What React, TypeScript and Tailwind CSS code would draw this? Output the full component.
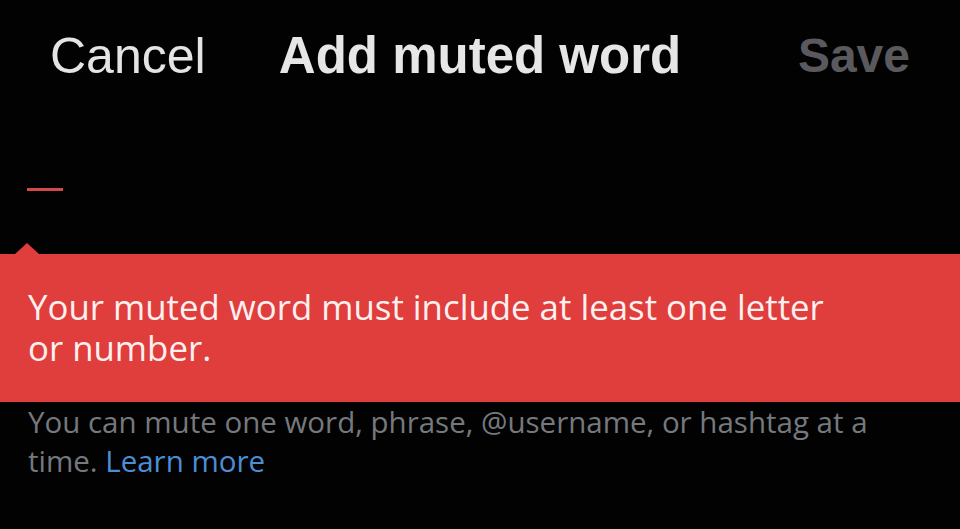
export default function App() {
  return (
    <div
      className="w-[960px] h-[529px] bg-[#020202] overflow-hidden"
      style={{ fontFamily: '"Liberation Sans", Arial, sans-serif' }}
    >
      <div className="grid grid-cols-[1fr_auto_1fr] items-center h-[110px] px-[50px] pt-[2px]">
        <div className="text-[50px] text-[#e4e4e4] justify-self-start">Cancel</div>
        <div className="text-[51px] font-bold text-[#e6e6e6]">Add muted word</div>
        <div className="text-[48px] font-bold text-[#5a5a5e] justify-self-end">Save</div>
      </div>

      <div className="pt-[78px] pl-[27px]">
        <div className="w-[36px] h-[3px] bg-[#d24a4a]" />
      </div>

      <div className="mt-[52px]" style={{ fontFamily: '"Open Sans", sans-serif' }}>
        <div className="pl-[15px] h-[11px] flex items-end">
          <div className="w-0 h-0 border-l-[12px] border-r-[12px] border-b-[11px] border-l-transparent border-r-transparent border-b-[#e03d3d]" />
        </div>
        <div className="bg-[#e03d3d] h-[148px] px-[28px] pt-[32px] text-[34.8px] leading-[41px] text-[#fdf0ef]">
          <p>Your muted word must include at least one letter</p>
          <p>or number.</p>
        </div>
      </div>

      <div
        className="px-[28px] text-[29.5px] leading-[39px] text-[#75797d]"
        style={{ fontFamily: '"Open Sans", sans-serif' }}
      >
        You can mute one word, phrase, @username, or hashtag at a
        <br />
        time. <span className="text-[#4b8ed6]">Learn more</span>
      </div>
    </div>
  );
}
